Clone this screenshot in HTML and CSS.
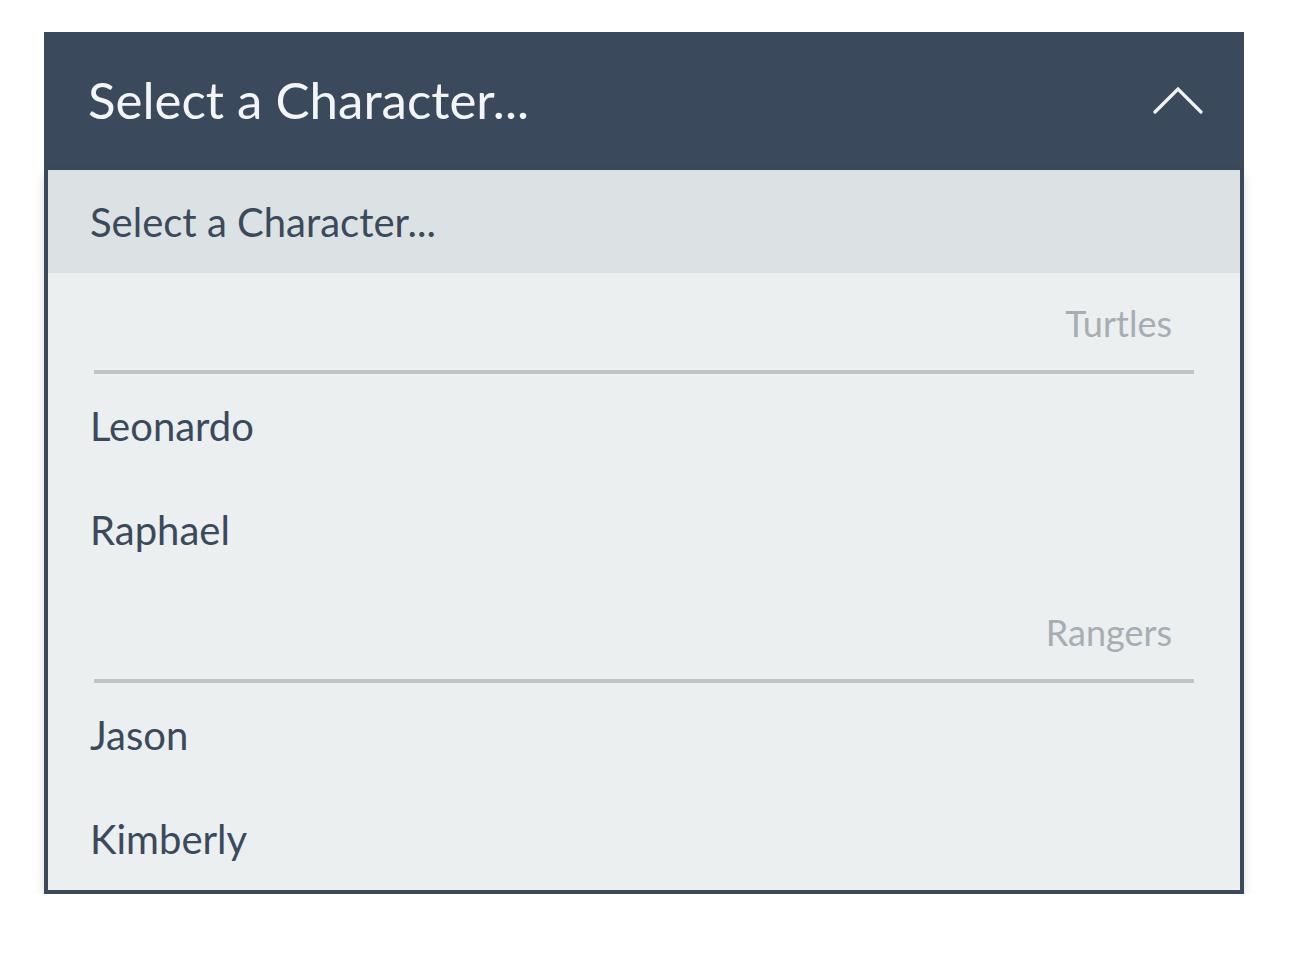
FILE: index.html
```html
<!DOCTYPE html>
<html>
<head>
<meta charset="utf-8">
<link rel="stylesheet" href="styles.css">
</head>
<body>
<div class="select">
  <div class="select-header">
    <span class="select-value">Select a Character...</span>
    <svg class="chevron" width="50" height="28" viewBox="0 0 50 28">
      <polyline points="2,25 25,2 48,25" fill="none" stroke="#f2f4f5" stroke-width="3.2" stroke-linecap="round" stroke-linejoin="miter"/>
    </svg>
  </div>
  <div class="select-list">
    <div class="option selected">Select a Character...</div>
    <div class="group"><span>Turtles</span></div>
    <div class="option">Leonardo</div>
    <div class="option">Raphael</div>
    <div class="group"><span>Rangers</span></div>
    <div class="option">Jason</div>
    <div class="option last">Kimberly</div>
  </div>
</div>
</body>
</html>
```
FILE: styles.css
```css
html, body {
  margin: 0;
  background: #ffffff;
}
body {
  padding: 32px 0 0 44px;
  font-family: "Lato", "Open Sans", sans-serif;
}
.select {
  width: 1200px;
}
.select-header {
  height: 138px;
  box-sizing: border-box;
  background: #3a4a5c;
  display: flex;
  align-items: center;
  justify-content: space-between;
  padding: 0 41px 0 44px;
  color: #f3f5f6;
}
.select-value {
  font-size: 51px;
  line-height: 1;
  margin-top: -3px;
}
.chevron {
  display: block;
}
.select-list {
  background: #ebeff0;
  border: 4px solid #3a4a5c;
  border-top: none;
  box-shadow: 0 5px 10px rgba(0, 0, 0, 0.14);
  display: flex;
  flex-direction: column;
}
.option {
  height: 104px;
  box-sizing: border-box;
  display: flex;
  align-items: center;
  padding: 0 0 0 42px;
  font-size: 40px;
  color: #3a4a5c;
}
.option.selected {
  height: 103px;
  background: #dce1e4;
}
.option.last {
  height: 103px;
}
.group {
  height: 101px;
  box-sizing: border-box;
  margin: 0 46px;
  padding: 0 22px 29px 0;
  display: flex;
  align-items: flex-end;
  justify-content: flex-end;
  border-bottom: 4px solid #c0c4c7;
  font-size: 36px;
  line-height: 1;
  color: #a6aeb4;
}
```
